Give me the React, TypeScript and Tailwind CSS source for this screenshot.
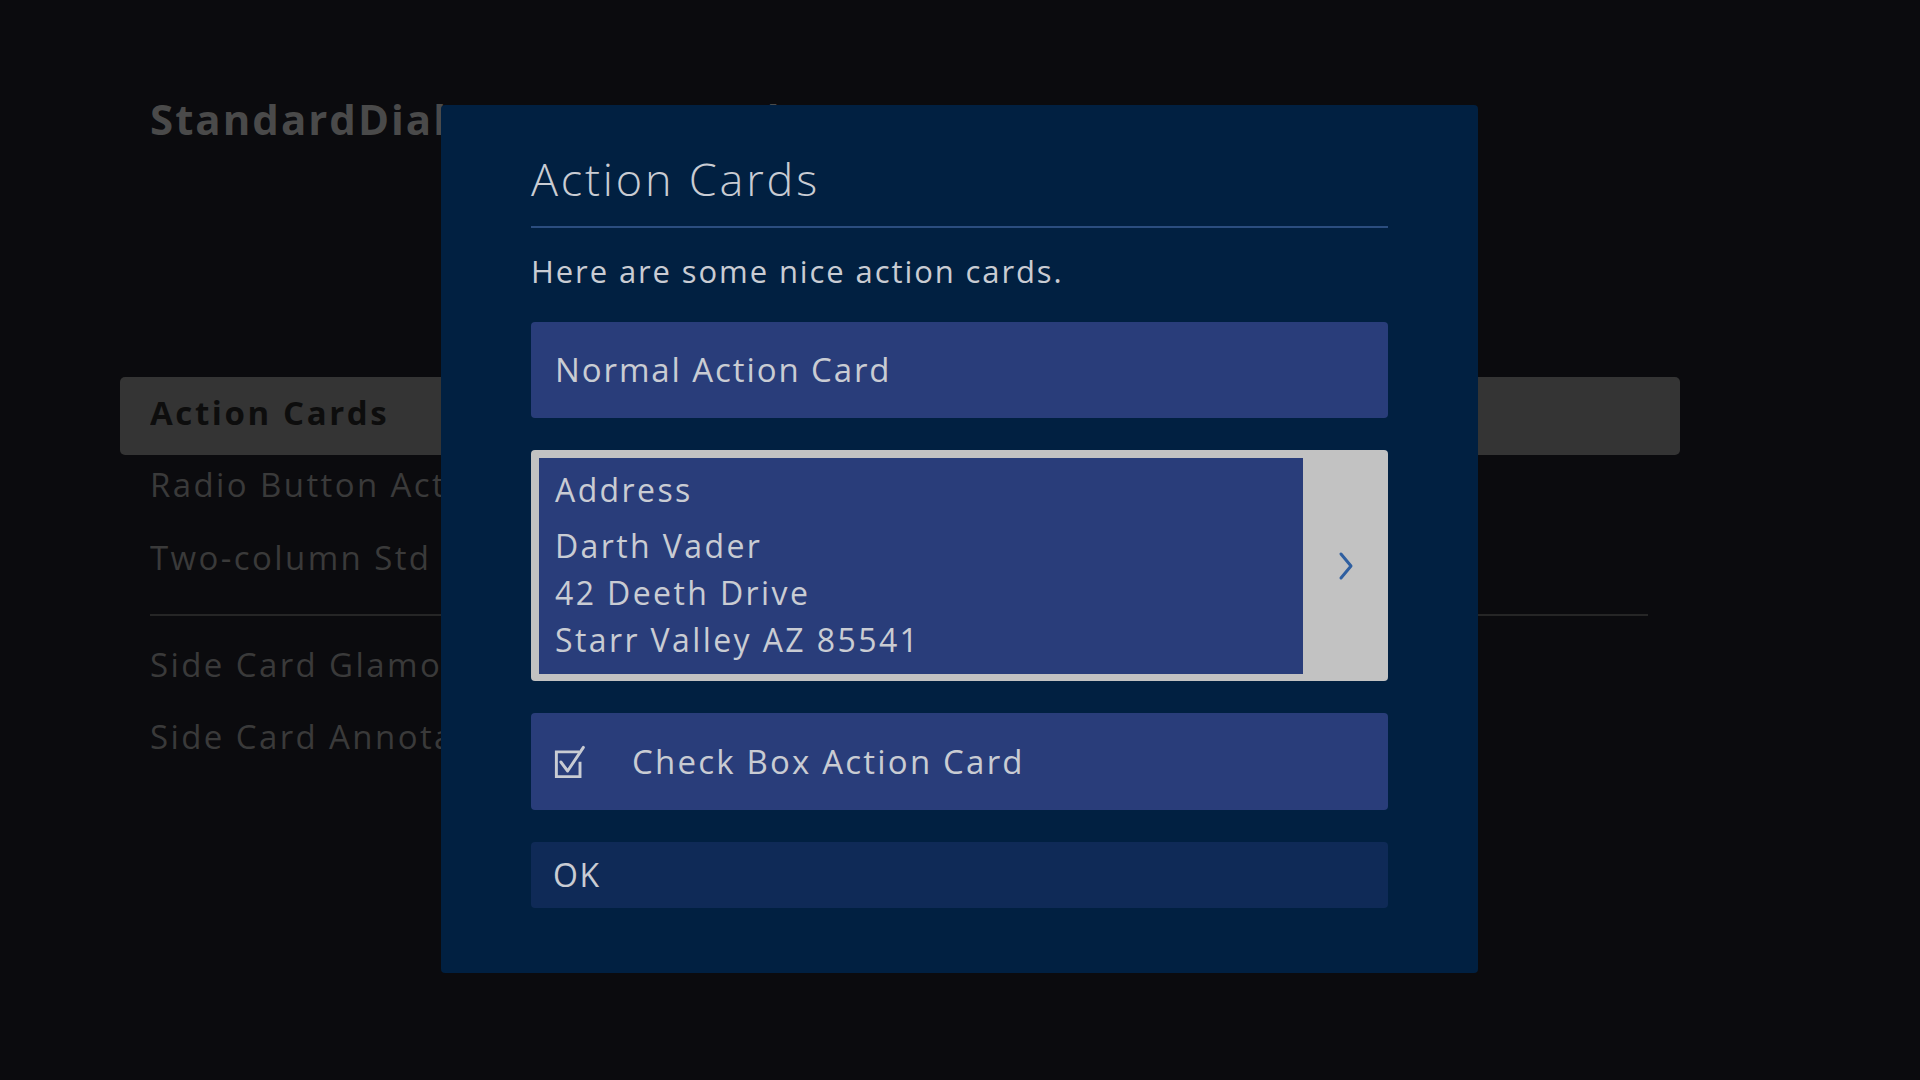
import React from 'react';

const font = { fontFamily: '"Open Sans", "Liberation Sans", sans-serif' };

function CheckIcon() {
    return (
        <svg width="36" height="36" viewBox="0 0 32 32" fill="none" stroke="#c9ccd3" strokeWidth="2.6" strokeLinecap="square">
            <path d="M22 7 H3 V29 H24 V17" />
            <path d="M7 16 L13 24 L27 3" strokeLinecap="round" strokeLinejoin="round" />
        </svg>
    );
}

function Chevron() {
    return (
        <svg width="18" height="30" viewBox="0 0 18 30" fill="none" stroke="#2f5fa0" strokeWidth="3" strokeLinecap="round" strokeLinejoin="round">
            <path d="M4 3 L14 15 L4 27" />
        </svg>
    );
}

export default function App() {
    const rows = ['Radio Button Action Cards', 'Two-column Std Dialog'];
    const sideRows = ['Side Card Glamour', 'Side Card Annotation'];

    return (
        <main className="relative w-[1920px] h-[1080px] overflow-hidden bg-[#0b0b0e]" style={font}>
            {/* Screen behind the dialog */}
            <div className="pl-[150px] pt-[98px]">
                <h1 className="text-[42px] leading-none font-bold text-[#4a4a4a] tracking-[2px]">StandardDialog SDK Examples</h1>
            </div>

            <div className="mt-[237px] ml-[120px] w-[1560px] flex flex-col">
                <div className="h-[78px] rounded-[5px] bg-[#343434] pl-[30px] pt-[16px]">
                    <div className="w-[291px] overflow-hidden whitespace-nowrap text-[33px] leading-[40px] font-bold text-[#0d0d0d] tracking-[2.6px]">Action Cards</div>
                </div>
                {rows.map((label, i) => (
                    <div key={label} className={`pl-[30px] ${i === 0 ? 'mt-[10px]' : 'mt-[33px]'}`}>
                        <div className="w-[291px] overflow-hidden whitespace-nowrap text-[33px] leading-[40px] text-[#3a3a3a] tracking-[2.4px]">{label}</div>
                    </div>
                ))}
                <div className="ml-[30px] mr-[32px] mt-[36px] h-[2px] bg-[#262626]" />
                {sideRows.map((label, i) => (
                    <div key={label} className={`pl-[30px] ${i === 0 ? 'mt-[29px]' : 'mt-[32px]'}`}>
                        <div className="w-[291px] overflow-hidden whitespace-nowrap text-[33px] leading-[40px] text-[#3a3a3a] tracking-[2.4px]">{label}</div>
                    </div>
                ))}
            </div>

            {/* Dialog */}
            <div className="absolute left-[441px] top-[105px] w-[1037px] h-[868px] rounded-[4px] bg-[#012041] px-[90px] pt-[51px] text-[#c9ccd3]">
                <h2 className="text-[45px] leading-none font-light tracking-[2.8px]">Action Cards</h2>
                <div className="mt-[25px] h-[2px] bg-[#2b4d7f]" />
                <p className="mt-[28px] text-[31px] leading-none tracking-[1.9px]">Here are some nice action cards.</p>

                <div className="mt-[35px] h-[96px] rounded-[4px] bg-[#293d7a] flex items-center px-[24px]">
                    <span className="text-[33px] tracking-[1.9px]">Normal Action Card</span>
                </div>

                <div className="mt-[32px] h-[231px] rounded-[4px] bg-[#c2c2c2] flex pl-[8px] pt-[8px] pb-[7px]">
                    <div className="flex-1 bg-[#293d7a] pl-[16px] pt-[8px]">
                        <div className="text-[32px] leading-[47px] tracking-[2.4px]">Address</div>
                        <div className="mt-[9px] text-[32px] leading-[47px] tracking-[2.4px]">
                            <div>Darth Vader</div>
                            <div>42 Deeth Drive</div>
                            <div>Starr Valley AZ 85541</div>
                        </div>
                    </div>
                    <div className="w-[85px] flex items-center justify-center">
                        <Chevron />
                    </div>
                </div>

                <div className="mt-[32px] h-[97px] rounded-[4px] bg-[#293d7a] flex items-center pl-[22px]">
                    <CheckIcon />
                    <span className="ml-[43px] text-[33px] tracking-[2.2px]">Check Box Action Card</span>
                </div>

                <div className="mt-[32px] h-[66px] rounded-[4px] bg-[#0f2a57] flex items-center px-[22px]">
                    <span className="text-[32px] tracking-[1.5px]">OK</span>
                </div>
            </div>
        </main>
    );
}
